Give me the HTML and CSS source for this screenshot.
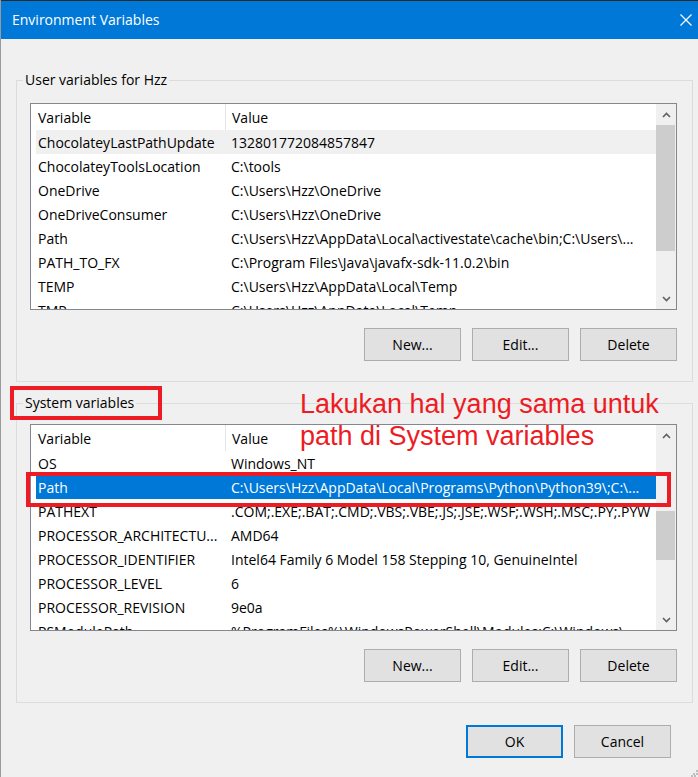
FILE: index.html
```html
<!DOCTYPE html>
<html lang="en">
<head>
<meta charset="utf-8">
<title>Environment Variables</title>
<link rel="stylesheet" href="styles.css">
</head>
<body>
<div class="window">
  <div class="titlebar">
    <span class="title">Environment Variables</span>
    <svg class="close" width="12" height="12" viewBox="0 0 12 12"><path d="M0.5 0.5 L11.5 11.5 M11.5 0.5 L0.5 11.5" stroke="#fff" stroke-width="1.2" fill="none"/></svg>
  </div>
  <div class="content">
    <fieldset class="group group-user">
      <legend>User variables for Hzz</legend>
      <div class="list">
        <div class="list-main">
          <div class="list-head"><div class="hcell">Variable</div><div class="hcell">Value</div></div>
          <div class="rows">
            <div class="row hot"><span>ChocolateyLastPathUpdate</span><span>132801772084857847</span></div>
            <div class="row"><span>ChocolateyToolsLocation</span><span>C:\tools</span></div>
            <div class="row"><span>OneDrive</span><span>C:\Users\Hzz\OneDrive</span></div>
            <div class="row"><span>OneDriveConsumer</span><span>C:\Users\Hzz\OneDrive</span></div>
            <div class="row"><span>Path</span><span>C:\Users\Hzz\AppData\Local\activestate\cache\bin;C:\Users\...</span></div>
            <div class="row"><span>PATH_TO_FX</span><span>C:\Program Files\Java\javafx-sdk-11.0.2\bin</span></div>
            <div class="row"><span>TEMP</span><span>C:\Users\Hzz\AppData\Local\Temp</span></div>
            <div class="row"><span>TMP</span><span>C:\Users\Hzz\AppData\Local\Temp</span></div>
          </div>
        </div>
        <div class="scrollbar">
          <div class="sb-arrow"><svg width="9" height="6" viewBox="0 0 9 6"><path d="M1 5 L4.5 1.5 L8 5" stroke="#606060" stroke-width="1.6" fill="none"/></svg></div>
          <div class="sb-track"><div class="sb-thumb" style="margin-top:0px;height:126px"></div></div>
          <div class="sb-arrow"><svg width="9" height="6" viewBox="0 0 9 6"><path d="M1 1 L4.5 4.5 L8 1" stroke="#606060" stroke-width="1.6" fill="none"/></svg></div>
        </div>
      </div>
      <div class="btns">
        <button class="btn">New...</button>
        <button class="btn">Edit...</button>
        <button class="btn">Delete</button>
      </div>
    </fieldset>

    <fieldset class="group group-system">
      <legend>System variables</legend>
      <div class="list">
        <div class="list-main">
          <div class="list-head"><div class="hcell">Variable</div><div class="hcell">Value</div></div>
          <div class="rows">
            <div class="row"><span>OS</span><span>Windows_NT</span></div>
            <div class="row selected"><span>Path</span><span>C:\Users\Hzz\AppData\Local\Programs\Python\Python39\;C:\...</span></div>
            <div class="row"><span>PATHEXT</span><span>.COM;.EXE;.BAT;.CMD;.VBS;.VBE;.JS;.JSE;.WSF;.WSH;.MSC;.PY;.PYW</span></div>
            <div class="row"><span>PROCESSOR_ARCHITECTU...</span><span>AMD64</span></div>
            <div class="row"><span>PROCESSOR_IDENTIFIER</span><span>Intel64 Family 6 Model 158 Stepping 10, GenuineIntel</span></div>
            <div class="row"><span>PROCESSOR_LEVEL</span><span>6</span></div>
            <div class="row"><span>PROCESSOR_REVISION</span><span>9e0a</span></div>
            <div class="row"><span>PSModulePath</span><span>%ProgramFiles%\WindowsPowerShell\Modules;C:\Windows\...</span></div>
          </div>
        </div>
        <div class="scrollbar">
          <div class="sb-arrow"><svg width="9" height="6" viewBox="0 0 9 6"><path d="M1 5 L4.5 1.5 L8 5" stroke="#606060" stroke-width="1.6" fill="none"/></svg></div>
          <div class="sb-track"><div class="sb-thumb" style="margin-top:65px;height:49px"></div></div>
          <div class="sb-arrow"><svg width="9" height="6" viewBox="0 0 9 6"><path d="M1 1 L4.5 4.5 L8 1" stroke="#606060" stroke-width="1.6" fill="none"/></svg></div>
        </div>
      </div>
      <div class="btns">
        <button class="btn">New...</button>
        <button class="btn">Edit...</button>
        <button class="btn">Delete</button>
      </div>
    </fieldset>

    <div class="dialog-btns">
      <button class="btn btn-default">OK</button>
      <button class="btn">Cancel</button>
    </div>
  </div>

  <div class="mark mark-legend"></div>
  <div class="mark mark-row"></div>
  <p class="note">Lakukan hal yang sama untuk<br>path di System variables</p>
  <svg class="grip" width="7" height="7" viewBox="0 0 7 7"><rect x="5" y="0" width="2" height="2" fill="#bdbdbd"/><rect x="2" y="3" width="2" height="2" fill="#bdbdbd"/><rect x="5" y="3" width="2" height="2" fill="#bdbdbd"/><rect x="0" y="5" width="2" height="2" fill="#bdbdbd"/><rect x="3" y="5" width="2" height="2" fill="#bdbdbd"/></svg>
</div>
</body>
</html>
```
FILE: styles.css
```css
* { box-sizing: border-box; }
html, body { margin: 0; padding: 0; background: #f0f0f0; }
body { font-family: "Open Sans", "Noto Sans", sans-serif; font-size: 14px; color: #000; }

.window {
  position: relative;
  width: 698px;
  height: 777px;
  overflow: hidden;
  background: #f0f0f0;
  border-left: 1px solid #9a9a9a;
}

.titlebar {
  height: 39px;
  background: #0078d7;
  border-top: 1px solid #2b2b2b;
  display: flex;
  align-items: center;
  justify-content: space-between;
  padding: 0 6px 0 11px;
  color: #fff;
}
.title { font-size: 14px; line-height: 20px; }
.close { display: block; }

.content { padding-top: 31px; }

.group {
  margin: 0 5px 0 15px;
  min-width: 0;
  border: 1px solid #dcdcdc;
  padding: 0 15px 20px 13px;
}
.group legend {
  line-height: 20px;
  padding: 0 2px;
  margin-left: -7px;
}
.group-system { margin-top: 11px; }

.list {
  display: flex;
  height: 207px;
  border: 1px solid #828790;
  background: #fff;
  margin-top: 13px;
}
.group-system .list { margin-top: 11px; }

.list-main { flex: 1; min-width: 0; overflow: hidden; }
.list-head {
  display: grid;
  grid-template-columns: 194px 1fr;
  height: 26px;
  overflow: hidden;
}
.hcell { padding-left: 7px; height: 26px; line-height: 28px; white-space: nowrap; }
.hcell + .hcell { border-left: 1px solid #e5e5e5; padding-left: 6px; }

.rows { height: 179px; overflow: hidden; }
.row {
  display: grid;
  grid-template-columns: 189px 1fr;
  height: 24px;
  line-height: 26px;
  margin-left: 5px;
  white-space: nowrap;
  overflow: hidden;
}
.row span { overflow: hidden; padding-left: 2px; }
.row span + span { padding-left: 6px; }
.row.hot { background: #f0f0f0; }
.row.selected { background: #0078d7; color: #fff; }

.scrollbar {
  width: 20px;
  background: #f0f0f0;
  display: flex;
  flex-direction: column;
}
.sb-arrow {
  height: 21px;
  display: flex;
  align-items: center;
  justify-content: center;
}
.sb-arrow svg { display: block; }
.sb-track { flex: 1; }
.sb-thumb { background: #cdcdcd; margin-right: 1px; }

.btns {
  display: flex;
  justify-content: flex-end;
  gap: 11px;
  margin-top: 18px;
}
.btn {
  width: 97px;
  height: 33px;
  background: #e1e1e1;
  border: 1px solid #adadad;
  font: inherit;
  color: #000;
  padding: 0;
}
.btn-default { border: 2px solid #0078d7; }

.dialog-btns {
  display: flex;
  justify-content: flex-end;
  gap: 11px;
  margin-top: 22px;
  padding-right: 27px;
}

.mark {
  position: absolute;
  border: 4px solid #ed1c24;
}
.mark-legend { left: 9px; top: 386px; width: 152px; height: 34px; }
.mark-row { left: 25px; top: 472px; width: 645px; height: 35px; }

.note {
  position: absolute;
  left: 299px;
  top: 388px;
  margin: 0;
  font-family: "Liberation Sans", Arial, sans-serif;
  font-size: 27px;
  line-height: 32px;
  color: #ed1c24;
  white-space: nowrap;
}

.grip { position: absolute; right: 0; bottom: 0; }
```
